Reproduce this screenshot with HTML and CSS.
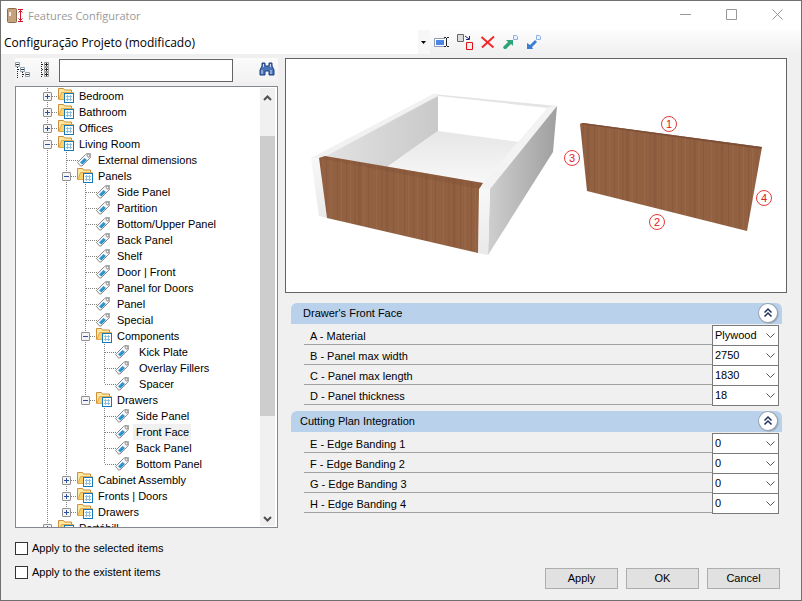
FILE: index.html
```
<!DOCTYPE html>
<html lang="en">
<head>
    <meta charset="UTF-8">
    <meta name="viewport" content="width=device-width, initial-scale=1.0">
    <title>Features Configurator</title>
    <link rel="stylesheet" href="styles.css">
</head>
<body>

    <!-- Shared icons -->
    <svg class="sprite" aria-hidden="true">
        <symbol id="folder" viewBox="0 0 17 16">
            <path d="M.5 11.500V.500h5l1 1.500h7v3" fill="#fce9a4" stroke="#cf8f36"/>
            <path d="M1 11.500 3.500 4.500h12l-1 7z" fill="#fbd46d" stroke="#e0a94e"/>
            <rect x="6.500" y="5.500" width="9" height="9" fill="#fff" stroke="#1479b8"/>
            <path d="M8 8.500h6M8 11.500h6M9.500 7v6M12.500 7v6" stroke="#8fbfdc" fill="none"/>
        </symbol>
        <symbol id="tag" viewBox="0 0 17 16">
            <path d="M1.500 10.500 9.500 2.500l1.500-1h3.500v4l-8.500 8.500h-1.500z" fill="#f8f8f8" stroke="#8b8b8b"/>
            <path d="M10 2.500l1.500-1h3v3.500l-1.500 1.500z" fill="#d0d0d0"/>
            <path d="M4 10.500 8.500 6l2.500 2-4.500 4.500z" fill="#2c93cf"/>
            <circle cx="12.500" cy="3.500" r="1.300" fill="#fff" stroke="#888"/>
        </symbol>
        <symbol id="up" viewBox="0 0 18 18">
            <path d="M5.500 8.500 9 5l3.500 3.500M5.500 12.500 9 9l3.500 3.500" fill="none" stroke="#1f2f63" stroke-width="1.500"/>
        </symbol>
    </svg>

    <div class="window">
        <header class="titlebar">
            <svg class="app-icon" width="17" height="16" viewBox="0 0 17 16">
                <rect x=".5" y=".5" width="9" height="14" rx="1" fill="#c4a27b" stroke="#8a6c4c"/>
                <path d="M3 4v4" stroke="#eee" stroke-width="2"/>
                <path d="M11 1.500h5M11 13.500h5M13.500 2v11M11.500 4.500l2-2 2 2M11.500 10.500l2 2 2-2" fill="none" stroke="#d8142c"/>
            </svg>
            <h1>Features Configurator</h1>
            <div class="window-buttons">
                <button type="button" aria-label="Minimize"><svg width="11" height="11" viewBox="0 0 11 11"><path d="M0 5.500h11"/></svg></button>
                <button type="button" aria-label="Maximize"><svg width="11" height="11" viewBox="0 0 11 11"><path d="M.5.5h10v10H.5z"/></svg></button>
                <button type="button" aria-label="Close"><svg width="11" height="11" viewBox="0 0 11 11"><path d="M.5.5l10 10M10.500.5l-10 10"/></svg></button>
            </div>
        </header>

        <div class="toolbar">
            <select class="project" aria-label="Project configuration">
                <option>Configuração Projeto (modificado)</option>
            </select>
            <button type="button" aria-label="Rename">
                <svg width="16" height="16" viewBox="0 0 16 16">
                    <path d="M11 4.500H.5v8H11" fill="#fff" stroke="#8d9bb5"/>
                    <path d="M2 6h8v5H2z" fill="#4d86e0"/>
                    <path d="M10 3.500h2M13 3.500h2M10 12.500h2M13 12.500h2M12.500 4v8" fill="none" stroke="#222"/>
                </svg>
            </button>
            <button type="button" aria-label="Replace">
                <svg width="16" height="16" viewBox="0 0 16 16">
                    <path d="M.5.5h6v7h-6z" fill="#ddd" stroke="#666"/>
                    <path d="M9.500 8.500h6v7h-6z" fill="#eee" stroke="#e01010"/>
                    <path d="M8 2l4 3M12.500 2v3.500H9" fill="none" stroke="#132a78"/>
                </svg>
            </button>
            <button type="button" aria-label="Delete">
                <svg width="16" height="16" viewBox="0 0 16 16">
                    <path d="M1.500 3 13.500 13.500M14 2.500 2 13.500" stroke="#ee2a2a" stroke-width="2" fill="none"/>
                </svg>
            </button>
            <button type="button" aria-label="Export">
                <svg width="16" height="16" viewBox="0 0 16 16">
                    <path d="M0 13 5 8 3 6h7v6L8 10 3 15H1z" fill="#2ea577"/>
                    <path d="M10.500 1.500h3l1 1v3h-4z" fill="#e8f1fc" stroke="#8fb3e0"/>
                </svg>
            </button>
            <button type="button" aria-label="Import">
                <svg width="16" height="16" viewBox="0 0 16 16">
                    <path d="M9 6 4 11 1 9v6h6L6 13 11 8z" fill="#3b7ed0"/>
                    <path d="M10.500 1.500h3l1 1v3h-4z" fill="#e8f1fc" stroke="#8fb3e0"/>
                </svg>
            </button>
        </div>

        <main class="content">
            <section class="sidebar">
                <div class="search">
                    <button type="button" aria-label="Collapse all">
                        <svg width="16" height="16" viewBox="0 0 16 16">
                            <path d="M.5.5h4v4h-4zM5.500 5.500h4v4h-4zM10.500 10.500h4v4h-4z" fill="#fff" stroke="#8aa0b0"/>
                            <path d="M1 2.500h3M6 7.500h3M11 12.500h3" stroke="#333"/>
                            <path d="M2.500 5v11M7.500 10v6M3 7.500h2M8 12.500h2" stroke="#222" stroke-dasharray="1 1" fill="none"/>
                        </svg>
                    </button>
                    <button type="button" aria-label="Expand all">
                        <svg width="10" height="16" viewBox="0 0 10 16">
                            <path d="M3.500.5h4v4h-4zM3.500 5.500h4v4h-4zM3.500 10.500h4v4h-4z" fill="#fff" stroke="#999"/>
                            <path d="M4 2.500h3M4 7.500h3M4 12.500h3M5.500 1v3M5.500 6v3M5.500 11v3" stroke="#222"/>
                            <path d="M.5 0v16M1 2.500h2M1 7.500h2M1 12.500h2" stroke="#222" stroke-dasharray="1 1" fill="none"/>
                        </svg>
                    </button>
                    <input type="text" aria-label="Search features">
                    <button type="button" class="find" aria-label="Find">
                        <svg width="16" height="15" viewBox="0 0 16 15">
                            <path d="M3 1h3v3h4V1h3v3l2 4v5h-5V9H6v4H1V8l2-4z" fill="#4a74b8" stroke="#1e3d7c"/>
                            <path d="M3 8v4M12 8v4M4.500 2v3M11.500 2v3" stroke="#c9dcf6"/>
                        </svg>
                    </button>
                </div>

                <div class="tree-box">
                    <ul class="tree">
                        <li><div class="node"><button type="button" class="toggle" aria-label="Expand"></button><svg><use href="#folder"/></svg><span>Bedroom</span></div></li>
                        <li><div class="node"><button type="button" class="toggle" aria-label="Expand"></button><svg><use href="#folder"/></svg><span>Bathroom</span></div></li>
                        <li><div class="node"><button type="button" class="toggle" aria-label="Expand"></button><svg><use href="#folder"/></svg><span>Offices</span></div></li>
                        <li><div class="node"><button type="button" class="toggle open" aria-label="Collapse"></button><svg><use href="#folder"/></svg><span>Living Room</span></div>
                            <ul>
                                <li><div class="node leaf"><svg><use href="#tag"/></svg><span>External dimensions</span></div></li>
                                <li><div class="node"><button type="button" class="toggle open" aria-label="Collapse"></button><svg><use href="#folder"/></svg><span>Panels</span></div>
                                    <ul>
                                        <li><div class="node leaf"><svg><use href="#tag"/></svg><span>Side Panel</span></div></li>
                                        <li><div class="node leaf"><svg><use href="#tag"/></svg><span>Partition</span></div></li>
                                        <li><div class="node leaf"><svg><use href="#tag"/></svg><span>Bottom/Upper Panel</span></div></li>
                                        <li><div class="node leaf"><svg><use href="#tag"/></svg><span>Back Panel</span></div></li>
                                        <li><div class="node leaf"><svg><use href="#tag"/></svg><span>Shelf</span></div></li>
                                        <li><div class="node leaf"><svg><use href="#tag"/></svg><span>Door | Front</span></div></li>
                                        <li><div class="node leaf"><svg><use href="#tag"/></svg><span>Panel for Doors</span></div></li>
                                        <li><div class="node leaf"><svg><use href="#tag"/></svg><span>Panel</span></div></li>
                                        <li><div class="node leaf"><svg><use href="#tag"/></svg><span>Special</span></div></li>
                                        <li><div class="node"><button type="button" class="toggle open" aria-label="Collapse"></button><svg><use href="#folder"/></svg><span>Components</span></div>
                                            <ul>
                                                <li><div class="node leaf"><svg><use href="#tag"/></svg><span>&nbsp;Kick Plate</span></div></li>
                                                <li><div class="node leaf"><svg><use href="#tag"/></svg><span>&nbsp;Overlay Fillers</span></div></li>
                                                <li><div class="node leaf"><svg><use href="#tag"/></svg><span>&nbsp;Spacer</span></div></li>
                                            </ul>
                                        </li>
                                        <li><div class="node"><button type="button" class="toggle open" aria-label="Collapse"></button><svg><use href="#folder"/></svg><span>Drawers</span></div>
                                            <ul>
                                                <li><div class="node leaf"><svg><use href="#tag"/></svg><span>Side Panel</span></div></li>
                                                <li><div class="node leaf selected"><svg><use href="#tag"/></svg><span>Front Face</span></div></li>
                                                <li><div class="node leaf"><svg><use href="#tag"/></svg><span>Back Panel</span></div></li>
                                                <li><div class="node leaf"><svg><use href="#tag"/></svg><span>Bottom Panel</span></div></li>
                                            </ul>
                                        </li>
                                    </ul>
                                </li>
                                <li><div class="node"><button type="button" class="toggle" aria-label="Expand"></button><svg><use href="#folder"/></svg><span>Cabinet Assembly</span></div></li>
                                <li><div class="node"><button type="button" class="toggle" aria-label="Expand"></button><svg><use href="#folder"/></svg><span>Fronts | Doors</span></div></li>
                                <li><div class="node"><button type="button" class="toggle" aria-label="Expand"></button><svg><use href="#folder"/></svg><span>Drawers</span></div></li>
                            </ul>
                        </li>
                        <li><div class="node"><button type="button" class="toggle" aria-label="Expand"></button><svg><use href="#folder"/></svg><span>Portáhill</span></div></li>
                    </ul>
                    <div class="scrollbar">
                        <button type="button" aria-label="Scroll up"><svg width="9" height="6" viewBox="0 0 9 6"><path d="M1 5l3.500-3.500L8 5"/></svg></button>
                        <div class="track"><div class="thumb"></div></div>
                        <button type="button" aria-label="Scroll down"><svg width="9" height="6" viewBox="0 0 9 6"><path d="M1 1l3.500 3.500L8 1"/></svg></button>
                    </div>
                </div>
            </section>

            <section class="details">
                <div class="preview">
                    <svg viewBox="286 59 500 233" role="img" aria-label="Drawer with numbered front face edges">
                        <defs>
                            <linearGradient id="sideIn" x1="0" x2="1"><stop offset="0" stop-color="#e2e2e2"/><stop offset="1" stop-color="#c9c9c9"/></linearGradient>
                            <linearGradient id="sideOut" x1="0" x2="1"><stop offset="0" stop-color="#cfcfcf"/><stop offset="1" stop-color="#9f9f9f"/></linearGradient>
                            <linearGradient id="bottom" x1="0" x2="0" y1="0" y2="1"><stop offset="0" stop-color="#e6e6e6"/><stop offset="1" stop-color="#f8f8f8"/></linearGradient>
                            <linearGradient id="edge" x1="0" x2="0" y1="0" y2="1"><stop offset="0" stop-color="#f8f8f8"/><stop offset="1" stop-color="#e9e9e9"/></linearGradient>
                            <pattern id="wood" width="67" height="300" patternUnits="userSpaceOnUse">
                                <path d="M0 0h67v300H0z" fill="#926141"/>
                                <path d="M2.500 0v300M11.500 0v300M20 0v300M33.500 0v300M47 0v300M58.500 0v300" stroke="#8a593e"/>
                                <path d="M6.500 0v300M15.500 0v300M29 0v300M41.500 0v300M63 0v300" stroke="#996848"/>
                                <path d="M24.500 0v300M52 0v300" stroke="#8c5b3f" stroke-width="3"/>
                            </pattern>
                        </defs>
                        <path d="M311 158 433 94 438 97 326 156 319 159z" fill="#f1f1f1"/>
                        <path d="M326 156 438 96V131L387 167z" fill="url(#sideIn)"/>
                        <path d="M438 131 519 142 482 184 387 167z" fill="url(#bottom)"/>
                        <path d="M433 94 557 106 548 108 438 96z" fill="#e4e4e4"/>
                        <path d="M548 107 557 106 490 190 479 189 482 184z" fill="#f3f3f3"/>
                        <path d="M557 106 553 152 488 255 490 189z" fill="url(#sideOut)"/>
                        <path d="M311 158H319L327 218 319 216z" fill="url(#edge)"/>
                        <path d="M480 188 490 189 488 255 478 253z" fill="url(#edge)"/>
                        <path d="M319 158 325 156 483 183 479 189 478 253 327 218z" fill="url(#wood)"/>
                        <path d="M319 158 325 156 483 183 479 189z" fill="#7d4f36" opacity=".3"/>
                        <path d="M580 124 583 123 762 147 747 231 587 191z" fill="url(#wood)"/>
                        <path d="M580 124 583 123 762 147 761 149z" fill="#7d4f36"/>
                        <g class="marks">
                            <circle cx="669" cy="124" r="7.500"/><text x="669" y="128">1</text>
                            <circle cx="657" cy="222" r="7.500"/><text x="657" y="226">2</text>
                            <circle cx="572" cy="158" r="7.500"/><text x="572" y="162">3</text>
                            <circle cx="764" cy="198" r="7.500"/><text x="764" y="202">4</text>
                        </g>
                    </svg>
                </div>

                <section class="group">
                    <div class="group-head">
                        <h2>&nbsp;Drawer's Front Face</h2>
                        <button type="button" aria-label="Collapse group"><svg width="18" height="18"><use href="#up"/></svg></button>
                    </div>
                    <div class="field"><label for="material">A - Material</label><select id="material"><option>Plywood</option></select></div>
                    <div class="field"><label for="width">B - Panel max width</label><select id="width"><option>2750</option></select></div>
                    <div class="field"><label for="length">C - Panel max length</label><select id="length"><option>1830</option></select></div>
                    <div class="field"><label for="thickness">D - Panel thickness</label><select id="thickness"><option>18</option></select></div>
                </section>

                <section class="group">
                    <div class="group-head">
                        <h2>Cutting Plan Integration</h2>
                        <button type="button" aria-label="Collapse group"><svg width="18" height="18"><use href="#up"/></svg></button>
                    </div>
                    <div class="field"><label for="edge1">E - Edge Banding 1</label><select id="edge1"><option>0</option></select></div>
                    <div class="field"><label for="edge2">F - Edge Banding 2</label><select id="edge2"><option>0</option></select></div>
                    <div class="field"><label for="edge3">G - Edge Banding 3</label><select id="edge3"><option>0</option></select></div>
                    <div class="field"><label for="edge4">H - Edge Banding 4</label><select id="edge4"><option>0</option></select></div>
                </section>
            </section>
        </main>

        <footer class="footer">
            <div class="checks">
                <label><input type="checkbox" name="selected"> Apply to the selected items</label>
                <label><input type="checkbox" name="existent"> Apply to the existent items</label>
            </div>
            <div class="actions">
                <button type="button">Apply</button>
                <button type="button">OK</button>
                <button type="button">Cancel</button>
            </div>
        </footer>
    </div>

</body>
</html>
```
FILE: styles.css
```
* {
    margin: 0;
    padding: 0;
    box-sizing: border-box;
}

body {
    font-family: "Liberation Sans", Arial, sans-serif;
    font-size: 11px;
    color: #000;
}

button {
    font: inherit;
    background: none;
    border: none;
}

select {
    font: inherit;
    color: inherit;
    appearance: none;
    border-radius: 0;
}

ul {
    list-style: none;
}

.sprite {
    display: none;
}

.window {
    display: flex;
    flex-direction: column;
    min-height: 100vh;
    background: #f0f0f0;
    border: 1px solid #707070;
}

/* Title bar */
.titlebar {
    display: flex;
    align-items: center;
    height: 29px;
    padding: 0 1px 0 6px;
    background: #fff;
}

.titlebar h1 {
    flex: 1;
    margin-left: 4px;
    font-family: "Open Sans", sans-serif;
    font-size: 11px;
    font-weight: normal;
    color: #999;
}

.window-buttons {
    display: flex;
}

.window-buttons button {
    width: 46px;
    height: 28px;
}

.window-buttons svg {
    fill: none;
    stroke: #999;
}

/* Toolbar */
.toolbar {
    display: flex;
    align-items: center;
    height: 24px;
    background: linear-gradient(#fdfdfd, #f0f0f0);
}

.toolbar button {
    width: 16px;
    height: 16px;
    margin: 0 3px 0 4px;
}

.project {
    flex: 0 1 429px;
    height: 24px;
    padding: 1px 0 0 3px;
    border: none;
    font-family: "Open Sans", sans-serif;
    font-size: 12px;
    background: url("data:image/svg+xml,%3Csvg xmlns='http://www.w3.org/2000/svg' width='5' height='3'%3E%3Cpath d='M0 0h5L2.500 3z'/%3E%3C/svg%3E") right 4px top 11px no-repeat,
        linear-gradient(#f7f7f7, #f7f7f7) right / 12px 100% no-repeat, #fff;
}

/* Main area */
.content {
    display: flex;
    gap: 7px;
    padding: 4px 14px 0 14px;
}

.sidebar {
    flex: 0 0 263px;
    display: flex;
    flex-direction: column;
}

.search {
    display: flex;
    align-items: center;
    height: 24px;
    margin-bottom: 4px;
    background: linear-gradient(#fbfbfb, #f2f2f2);
}

.search button {
    height: 16px;
    margin-right: 10px;
}

.search input {
    width: 174px;
    height: 23px;
    margin-left: -2px;
    padding: 0 4px;
    border: 1px solid #646464;
    font: inherit;
}

.search .find {
    margin: 0 3px 0 auto;
}

.tree-box {
    display: flex;
    justify-content: space-between;
    height: 442px;
    padding: 1px 2px 1px 24px;
    background: #fff;
    border: 1px solid #828790;
}

.tree {
    height: 439px;
    overflow: hidden;
    white-space: nowrap;
}

.tree ul {
    margin-left: 19px;
}

/* dotted connector running down the left of each level */
.tree li {
    background: repeating-linear-gradient(#808080 0 1px, transparent 1px 2px) 7px 0 / 1px 100% no-repeat;
}

.tree ul > li:last-child {
    background-size: 1px 8px;
}

.node {
    display: flex;
    align-items: center;
    height: 16px;
    padding-left: 3px;
    background: repeating-linear-gradient(90deg, #808080 0 1px, transparent 1px 2px) 8px 8px / 11px 1px no-repeat;
}

.node svg {
    width: 17px;
    height: 16px;
    margin: 0 1px 0 6px;
}

.node.leaf {
    padding-left: 11px;
}

.node.leaf svg {
    margin-right: 2px;
}

.node span {
    padding: 0 2px 0 3px;
    line-height: 16px;
}

.node.selected span {
    background: #f0f0f0;
}

.toggle {
    width: 9px;
    height: 9px;
    border: 1px solid #919191;
    border-radius: 1px;
    background: linear-gradient(#32509a, #32509a) 1px 3px / 5px 1px no-repeat,
        linear-gradient(#32509a, #32509a) 3px 1px / 1px 5px no-repeat, #f4f4f4;
}

.toggle.open {
    background: linear-gradient(#32509a, #32509a) 1px 3px / 5px 1px no-repeat, #f4f4f4;
}

.scrollbar {
    display: flex;
    flex-direction: column;
    width: 15px;
    background: #f0f0f0;
}

.scrollbar button {
    height: 17px;
}

.scrollbar svg {
    fill: none;
    stroke: #505050;
    stroke-width: 2;
}

.track {
    flex: 1;
    padding-top: 31px;
}

.thumb {
    height: 280px;
    background: #cdcdcd;
}

.details {
    flex: 1;
    min-width: 0;
}

.preview {
    margin-bottom: 10px;
    background: #fff;
    border: 1px solid #646464;
}

.preview svg {
    display: block;
    width: 100%;
}

.marks circle {
    fill: #fff;
    stroke: #e53a3a;
}

.marks text {
    fill: #e02020;
    text-anchor: middle;
}

/* Property groups */
.group {
    margin: 0 5px 6px 6px;
}

.group-head {
    display: flex;
    align-items: center;
    justify-content: space-between;
    height: 21px;
    margin-bottom: 1px;
    padding: 0 5px 1px 9px;
    background: #b9d1ea;
    border-radius: 6px 6px 0 0;
}

.group-head h2 {
    font-size: 11px;
    font-weight: normal;
}

.group-head button {
    width: 18px;
    height: 18px;
    border-radius: 50%;
    background: #fff;
    box-shadow: 0 0 0 1px #9aa5b8, 1px 1px 2px #777;
}

.group-head svg {
    display: block;
}

.field {
    display: flex;
    height: 20px;
    margin: 0 3px 0 13px;
}

.field label {
    flex: 1;
    padding-left: 6px;
    border-bottom: 1px solid #a0a0a0;
    line-height: 22px;
}

.field select {
    width: 67px;
    height: 21px;
    padding: 0 0 2px 2px;
    border: 1px solid #7a7a7a;
    background: #fff url("data:image/svg+xml,%3Csvg xmlns='http://www.w3.org/2000/svg' width='9' height='6'%3E%3Cpath d='M.5.5l4 4 4-4' fill='none' stroke='%23555'/%3E%3C/svg%3E") right 3px center no-repeat;
}

/* Footer */
.footer {
    flex: 1;
    display: flex;
    justify-content: space-between;
    align-items: flex-end;
    padding: 8px 21px 11px 14px;
}

.checks {
    align-self: flex-start;
}

.checks label {
    display: flex;
    align-items: center;
    gap: 4px;
    height: 24px;
}

.checks input {
    appearance: none;
    width: 13px;
    height: 13px;
    background: #fff;
    border: 1px solid #333;
}

.actions {
    display: flex;
    gap: 8px;
}

.actions button {
    width: 73px;
    height: 21px;
    padding-bottom: 2px;
    background: #e1e1e1;
    border: 1px solid #adadad;
}
```
